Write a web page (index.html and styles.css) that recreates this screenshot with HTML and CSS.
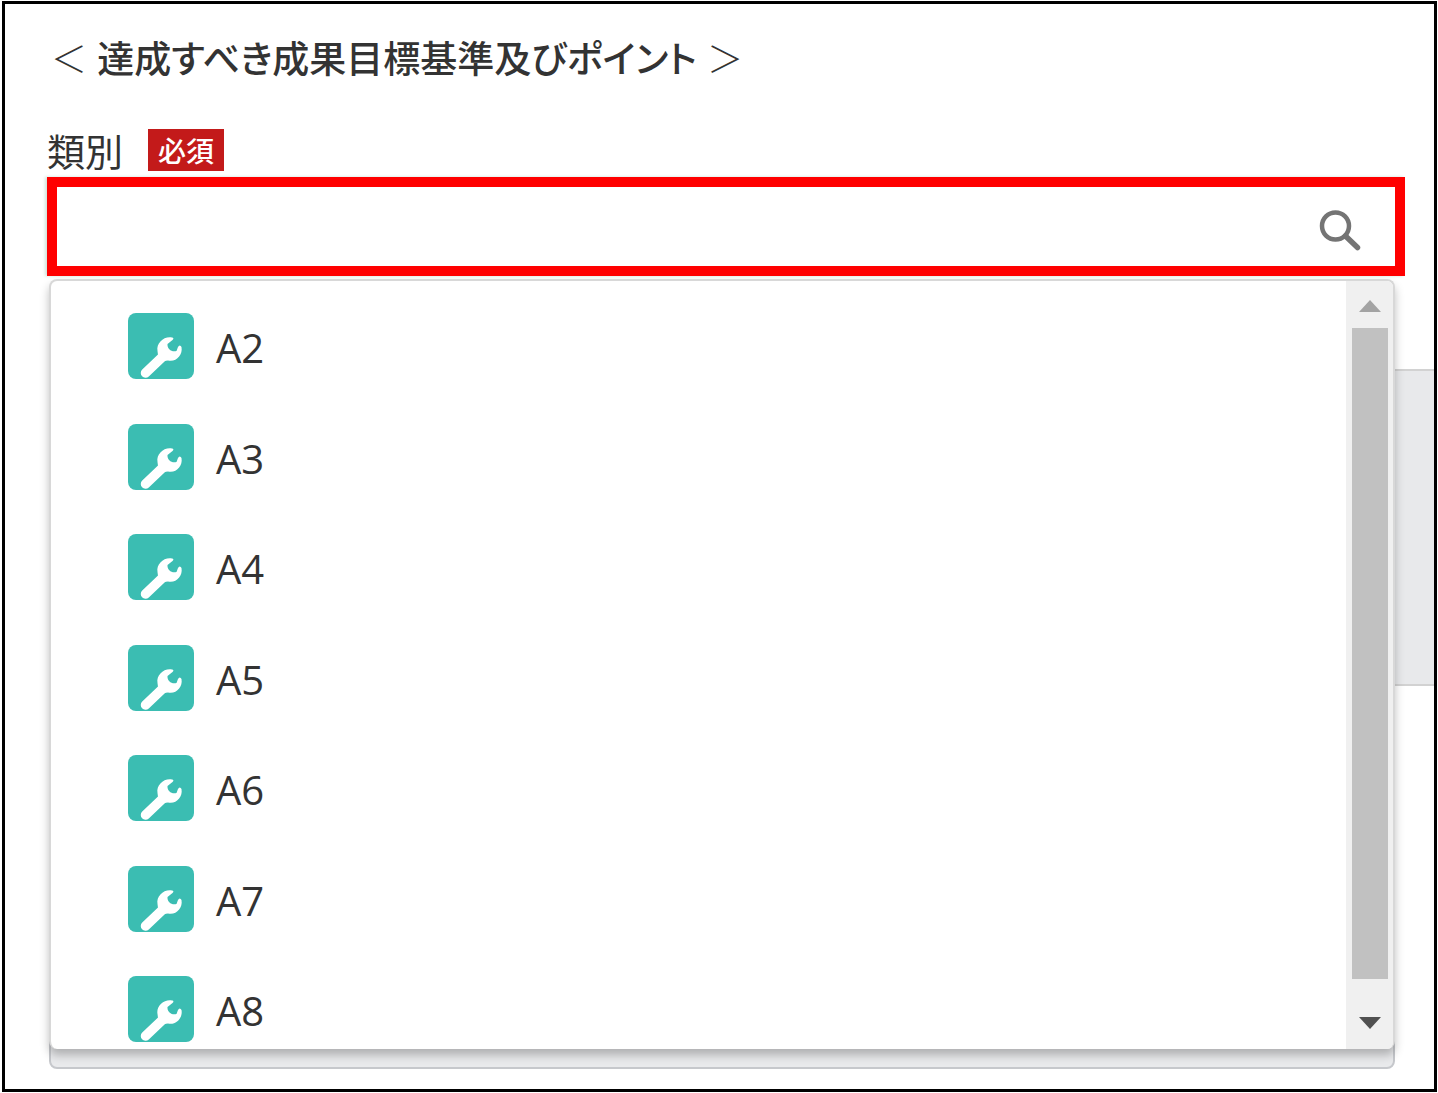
FILE: index.html
```html
<!DOCTYPE html>
<html lang="ja">
<head>
<meta charset="utf-8">
<meta name="viewport" content="width=device-width, initial-scale=1">
<title>達成すべき成果目標基準及びポイント</title>
<link rel="stylesheet" href="styles.css">
</head>
<body>
<svg class="defs" aria-hidden="true">
  <symbol id="wrench" viewBox="0 0 66 66">
    <path d="M17.500 60 L38 40.500" stroke="#fff" stroke-width="9.500" stroke-linecap="round"/>
    <path d="M44 24.500 C36 23 28 30 29.500 38 L30 42 L36 48 L40 47.500 C48 49.500 55 42 53.500 34 C52.500 32 51 32 50 34 L48.500 38 C44 39.500 39 36 39.500 31 L44.500 27 C46 25.500 45.500 24.700 44 24.500 Z" fill="#fff"/>
  </symbol>
</svg>
<main class="frame">
  <h1 class="title"><span class="bracket">＜</span> 達成すべき成果目標基準及びポイント <span class="bracket">＞</span></h1>
  <div class="label-row">
    <label class="label" for="category">類別</label>
    <span class="required">必須</span>
  </div>
  <div class="lookup">
    <div class="field">
      <input class="field-input" id="category" type="text" role="combobox" aria-expanded="true" aria-controls="options">
      <button class="search" type="button" aria-label="検索">
        <svg viewBox="0 0 44 44" width="44" height="44" fill="none" stroke="#747474">
          <circle cx="17.500" cy="18" r="13.500" stroke-width="4.500"/>
          <path d="M27.500 28 L39.500 39.500" stroke-width="5.500" stroke-linecap="round"/>
        </svg>
      </button>
    </div>
    <div class="menu">
      <ul class="options" id="options" role="listbox">
        <li class="option" role="option"><svg class="icon"><use href="#wrench"/></svg>A2</li>
        <li class="option" role="option"><svg class="icon"><use href="#wrench"/></svg>A3</li>
        <li class="option" role="option"><svg class="icon"><use href="#wrench"/></svg>A4</li>
        <li class="option" role="option"><svg class="icon"><use href="#wrench"/></svg>A5</li>
        <li class="option" role="option"><svg class="icon"><use href="#wrench"/></svg>A6</li>
        <li class="option" role="option"><svg class="icon"><use href="#wrench"/></svg>A7</li>
        <li class="option" role="option"><svg class="icon"><use href="#wrench"/></svg>A8</li>
      </ul>
      <div class="scrollbar" aria-hidden="true">
        <svg class="arrow" viewBox="0 0 22 12"><path d="M0 12 L11 0 L22 12 Z" fill="#a3a3a3"/></svg>
        <div class="thumb"></div>
        <svg class="arrow" viewBox="0 0 22 12"><path d="M0 0 H22 L11 12 Z" fill="#505050"/></svg>
      </div>
    </div>
  </div>
  <div class="section-band"></div>
  <div class="readonly-box"></div>
</main>
</body>
</html>
```
FILE: styles.css
```css
* {
  box-sizing: border-box;
}

body {
  margin: 0;
  padding: 1px 1px 1px 2px;
  background: #fff;
  color: #333;
  font-family: "Open Sans", "Noto Sans CJK JP", sans-serif;
}

.defs {
  position: absolute;
  width: 0;
  height: 0;
}

.frame {
  border: 3px solid #000;
  padding: 25px 0 20px;
}

.title {
  margin: 0;
  padding-left: 44px;
  font-family: "Noto Sans CJK JP", sans-serif;
  font-size: 37px;
  line-height: 56px;
  font-weight: 500;
  font-feature-settings: "palt";
}

.bracket {
  margin: 0 2px;
  font-size: 36px;
  font-weight: 300;
  font-feature-settings: normal;
}

.label-row {
  display: flex;
  align-items: center;
  gap: 25px;
  padding: 44px 0 6px 42px;
}

.label {
  font-family: "Noto Sans CJK JP", sans-serif;
  font-size: 38px;
  line-height: 42px;
  font-weight: 400;
}

.required {
  padding: 0 10px;
  background: #c31a1a;
  color: #fff;
  font-family: "Noto Sans CJK JP", sans-serif;
  font-size: 28px;
  line-height: 42px;
  font-weight: 500;
}

.lookup {
  position: relative;
  margin: 0 29px 0 42px;
}

.field {
  display: flex;
  align-items: center;
  height: 99px;
  padding-right: 33px;
  border: 10px solid #f00;
  background: #fff;
  box-shadow: -2px 0 3px #cfe3d8;
}

.field-input {
  flex: 1;
  min-width: 0;
  height: 100%;
  padding: 0 20px;
  border: 0;
  outline: 0;
  background: transparent;
  color: inherit;
  font: inherit;
  font-size: 38px;
}

.search {
  display: flex;
  padding: 6px 0 0;
  border: 0;
  background: transparent;
}

.menu {
  position: absolute;
  z-index: 1;
  top: 102px;
  left: 2px;
  right: 10px;
  display: flex;
  height: 770px;
  border: 2px solid #d8d8d8;
  border-bottom-width: 0;
  border-radius: 8px;
  background: #fff;
  box-shadow: 0 6px 10px rgba(0, 0, 0, .25);
}

.options {
  flex: 1;
  display: flex;
  flex-direction: column;
  justify-content: space-between;
  margin: 0;
  padding: 32px 0 7px 77px;
  list-style: none;
}

.option {
  display: flex;
  gap: 22px;
  height: 66px;
  font-size: 40px;
  line-height: 70px;
}

.icon {
  width: 66px;
  height: 66px;
  border-radius: 8px;
  background: #3bbdb2;
}

.scrollbar {
  display: flex;
  flex-direction: column;
  align-items: center;
  gap: 16px;
  width: 47px;
  padding: 19px 0 20px;
  border-radius: 0 6px 6px 0;
  background: #f0f0f0;
}

.arrow {
  width: 22px;
  height: 12px;
}

.thumb {
  flex: 1;
  width: 36px;
  margin-bottom: 22px;
  background: #c1c1c1;
}

.section-band {
  height: 317px;
  margin: 93px 0 0 60px;
  border: 2px solid #d2d2d2;
  border-width: 2px 0;
  background: #e8e9eb;
}

.readonly-box {
  height: 80px;
  margin: 303px 39px 0 44px;
  border: 2px solid #c6c8cc;
  border-radius: 8px;
  background: #e9eaec;
}
```
